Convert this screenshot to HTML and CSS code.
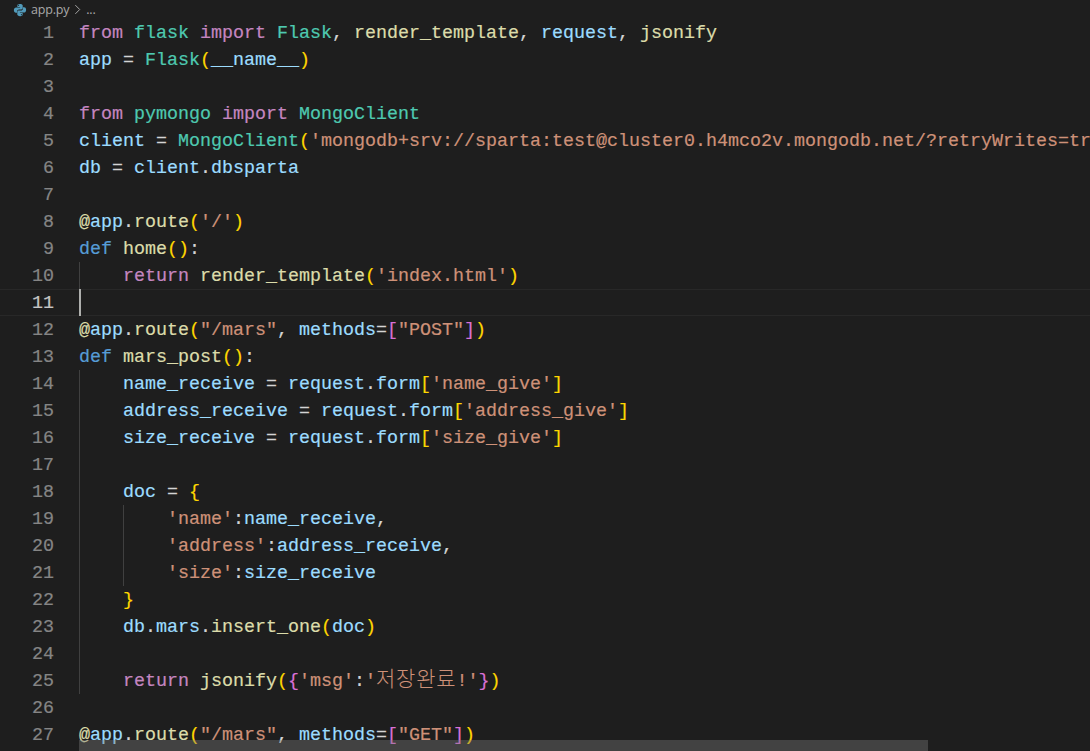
FILE: index.html
```html
<!DOCTYPE html>
<html lang="en">
<head>
<meta charset="utf-8">
<title>app.py</title>
<link rel="stylesheet" href="styles.css">
</head>
<body>
<main class="editor">
<nav class="crumbs">
<svg class="py-icon" viewBox="0 0 16 16"><path d="M7.900 1C5 1 5 2.300 5 2.800V4.600h3.100v.6H3.500C2.200 5.200 1 6.200 1 8.100c0 2.100 1 3 2.300 3H4.700V9.500c0-1.200 1-2.200 2.200-2.200h2.500c1 0 1.700-.8 1.700-1.700V2.800C11.100 1.800 10 1 7.900 1zM6.400 2.100a.6.6 0 1 1 0 1.200.6.6 0 0 1 0-1.200z"/><path d="M8.100 15c2.900 0 2.900-1.300 2.900-1.800v-1.800H7.900v-.6h4.600c1.300 0 2.500-1 2.500-2.900 0-2.100-1-3-2.300-3h-1.400v1.600c0 1.200-1 2.200-2.200 2.200H6.600c-1 0-1.700.8-1.700 1.700v2.800C4.900 14.200 6 15 8.100 15zm1.500-1.100a.6.6 0 1 1 0-1.200.6.6 0 0 1 0 1.200z"/></svg>
<span class="crumb">app.py</span>
<svg class="chev" viewBox="0 0 8 12"><path d="M1.500 1l5 5-5 5"/></svg>
<span class="crumb">...</span>
</nav>
<div class="code">
<div class="line"><span class="num">1</span><span class="src"><b class="k">from</b> <b class="c">flask</b> <b class="k">import</b> <b class="c">Flask</b>, <b class="f">render_template</b>, <b class="v">request</b>, <b class="f">jsonify</b></span></div>
<div class="line"><span class="num">2</span><span class="src"><b class="v">app</b> = <b class="c">Flask</b><b class="b1">(</b><b class="v">__name__</b><b class="b1">)</b></span></div>
<div class="line"><span class="num">3</span><span class="src"></span></div>
<div class="line"><span class="num">4</span><span class="src"><b class="k">from</b> <b class="c">pymongo</b> <b class="k">import</b> <b class="c">MongoClient</b></span></div>
<div class="line"><span class="num">5</span><span class="src"><b class="v">client</b> = <b class="c">MongoClient</b><b class="b1">(</b><b class="s">'mongodb+srv://sparta:test@cluster0.h4mco2v.mongodb.net/?retryWrites=tr</b></span></div>
<div class="line"><span class="num">6</span><span class="src"><b class="v">db</b> = <b class="v">client</b>.<b class="v">dbsparta</b></span></div>
<div class="line"><span class="num">7</span><span class="src"></span></div>
<div class="line"><span class="num">8</span><span class="src"><b class="f">@</b><b class="v">app</b>.<b class="f">route</b><b class="b1">(</b><b class="s">'/'</b><b class="b1">)</b></span></div>
<div class="line"><span class="num">9</span><span class="src"><b class="d">def</b> <b class="f">home</b><b class="b1">()</b>:</span></div>
<div class="line"><span class="num">10</span><span class="src"><i class="ind"></i><b class="k">return</b> <b class="f">render_template</b><b class="b1">(</b><b class="s">'index.html'</b><b class="b1">)</b></span></div>
<div class="line active"><span class="num">11</span><span class="src"><i class="caret"></i></span></div>
<div class="line"><span class="num">12</span><span class="src"><b class="f">@</b><b class="v">app</b>.<b class="f">route</b><b class="b1">(</b><b class="s">"/mars"</b>, <b class="v">methods</b>=<b class="b2">[</b><b class="s">"POST"</b><b class="b2">]</b><b class="b1">)</b></span></div>
<div class="line"><span class="num">13</span><span class="src"><b class="d">def</b> <b class="f">mars_post</b><b class="b1">()</b>:</span></div>
<div class="line"><span class="num">14</span><span class="src"><i class="ind"></i><b class="v">name_receive</b> = <b class="v">request</b>.<b class="v">form</b><b class="b1">[</b><b class="s">'name_give'</b><b class="b1">]</b></span></div>
<div class="line"><span class="num">15</span><span class="src"><i class="ind"></i><b class="v">address_receive</b> = <b class="v">request</b>.<b class="v">form</b><b class="b1">[</b><b class="s">'address_give'</b><b class="b1">]</b></span></div>
<div class="line"><span class="num">16</span><span class="src"><i class="ind"></i><b class="v">size_receive</b> = <b class="v">request</b>.<b class="v">form</b><b class="b1">[</b><b class="s">'size_give'</b><b class="b1">]</b></span></div>
<div class="line"><span class="num">17</span><span class="src"><i class="ind"></i></span></div>
<div class="line"><span class="num">18</span><span class="src"><i class="ind"></i><b class="v">doc</b> = <b class="b1">{</b></span></div>
<div class="line"><span class="num">19</span><span class="src"><i class="ind"></i><i class="ind"></i><b class="s">'name'</b>:<b class="v">name_receive</b>,</span></div>
<div class="line"><span class="num">20</span><span class="src"><i class="ind"></i><i class="ind"></i><b class="s">'address'</b>:<b class="v">address_receive</b>,</span></div>
<div class="line"><span class="num">21</span><span class="src"><i class="ind"></i><i class="ind"></i><b class="s">'size'</b>:<b class="v">size_receive</b></span></div>
<div class="line"><span class="num">22</span><span class="src"><i class="ind"></i><b class="b1">}</b></span></div>
<div class="line"><span class="num">23</span><span class="src"><i class="ind"></i><b class="v">db</b>.<b class="v">mars</b>.<b class="f">insert_one</b><b class="b1">(</b><b class="v">doc</b><b class="b1">)</b></span></div>
<div class="line"><span class="num">24</span><span class="src"><i class="ind"></i></span></div>
<div class="line"><span class="num">25</span><span class="src"><i class="ind"></i><b class="k">return</b> <b class="f">jsonify</b><b class="b1">(</b><b class="b2">{</b><b class="s">'msg'</b>:<b class="s">'<span class="ko">저장완료</span>!'</b><b class="b2">}</b><b class="b1">)</b></span></div>
<div class="line"><span class="num">26</span><span class="src"></span></div>
<div class="line"><span class="num">27</span><span class="src"><b class="f">@</b><b class="v">app</b>.<b class="f">route</b><b class="b1">(</b><b class="s">"/mars"</b>, <b class="v">methods</b>=<b class="b2">[</b><b class="s">"GET"</b><b class="b2">]</b><b class="b1">)</b></span></div>
</div>
<div class="hscroll"></div>
</main>
</body>
</html>
```
FILE: styles.css
```css
* { box-sizing: border-box; }
html, body { margin: 0; height: 100%; background: #1e1e1e; overflow: hidden; }
.editor { position: relative; width: 1090px; height: 751px; overflow: hidden; background: #1e1e1e; }
.crumbs { display: flex; align-items: center; height: 19px; padding-left: 13px; color: #a9a9a9; font: 12.500px/19px "Open Sans", sans-serif; letter-spacing: -0.2px; }
.py-icon { width: 14px; height: 14px; fill: #519aba; margin-right: 4px; }
.chev { width: 7px; height: 11px; margin: 0 5px 0 5px; fill: none; stroke: #a9a9a9; stroke-width: 1.100; }
.code { font: 18.330px/29px "Liberation Mono", monospace; color: #d4d4d4; -webkit-text-stroke: 0.2px; }
.line { display: flex; height: 27px; }
.num { flex: 0 0 54px; text-align: right; color: #858585; }
.src { display: block; margin-left: 25px; flex: 1; min-width: 0; white-space: pre; }
.src b { font-weight: 400; }
.ind { display: inline-block; width: 44px; height: 27px; vertical-align: top; box-shadow: inset 1px 0 0 #404040; }
.active { box-shadow: inset 0 1px 0 #282828, inset 0 -1px 0 #282828; }
.active .num { color: #c6c6c6; }
.caret { display: block; width: 2px; height: 27px; background: #aeafad; }
.k { color: #c586c0; }
.d { color: #569cd6; }
.c { color: #4ec9b0; }
.f { color: #dcdcaa; }
.v { color: #9cdcfe; }
.s { color: #ce9178; }
.b1 { color: #ffd700; }
.b2 { color: #da70d6; }
.ko { font-family: "Noto Sans CJK KR", sans-serif; font-size: 21px; font-weight: 300; line-height: 20px; letter-spacing: 0.8px; -webkit-text-stroke: 0; }
.hscroll { position: absolute; left: 79px; top: 740px; width: 849px; height: 11px; background: rgba(121, 121, 121, 0.4); }
```
